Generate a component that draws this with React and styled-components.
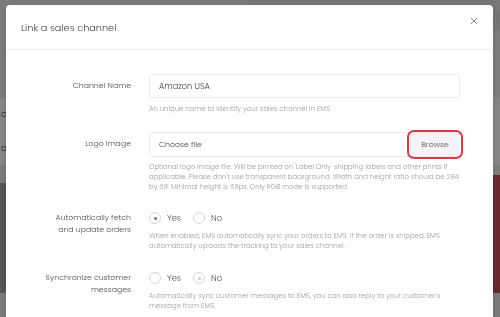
import styled, { createGlobalStyle } from 'styled-components';

const GlobalStyle = createGlobalStyle`
	html, body {
		margin: 0;
		padding: 0;
		width: 500px;
		height: 317px;
		overflow: hidden;
	}
	body {
		font-family: Poppins, Inter, 'Noto Sans', sans-serif;
		font-weight: 300;
		-webkit-font-smoothing: antialiased;
	}
`;

const Page = styled.div`
	display: flex;
	width: 500px;
	height: 317px;
	overflow: hidden;
`;
const Pane = styled.div`
	display: flex;
	flex-direction: column;
	flex: 1;
`;
const Band = styled.div`
	height: ${p => p.h}px;
	flex: ${p => (p.h ? 'none' : 1)};
	background: ${p => p.bg};
	color: #333;
	font-size: 9px;
	display: flex;
	align-items: center;
	padding-left: 1px;
`;

const Overlay = styled.div`
	position: fixed;
	inset: 0;
	background: rgba(0, 0, 0, 0.46);
`;

const Modal = styled.div`
	position: fixed;
	top: 5px;
	left: 6px;
	width: 487px;
	height: 340px;
	background: #fff;
	border-radius: 4px;
	box-shadow: 0 2px 8px rgba(0, 0, 0, 0.15);
`;
const Header = styled.div`
	display: flex;
	align-items: center;
	justify-content: space-between;
	height: 44px;
	padding: 0 15px;
	border-bottom: 1px solid #ebedf0;
`;
const Title = styled.h5`
	margin: 0;
	font-size: 9.7px;
	font-weight: 300;
	color: #444;
	padding-top: 1px;
`;
const Close = styled.button`
	border: 0;
	background: none;
	padding: 0;
	margin-top: -13px;
	display: flex;
	color: #8a8a8a;
`;

const Body = styled.div`
	padding: 24px 33px 0 16px;
	display: flex;
	flex-direction: column;
`;
const FormRow = styled.div`
	display: grid;
	grid-template-columns: 109px minmax(0, 1fr);
	column-gap: 18px;
	margin-bottom: ${p => p.mb}px;
`;
const Label = styled.label`
	text-align: right;
	font-size: 7.8px;
	line-height: 12px;
	color: #4d4d4d;
	padding-top: ${p => p.pad}px;
`;
const Field = styled.div`
	display: flex;
	flex-direction: column;
	min-width: 0;
`;
const Input = styled.div`
	display: flex;
	align-items: center;
	height: ${p => p.h}px;
	box-sizing: border-box;
	border: 1px solid #ebebeb;
	border-radius: 3px;
	padding-left: 9px;
	font-size: 8.2px;
	color: #444;
`;
const FileInput = styled(Input)`
	justify-content: space-between;
	font-size: 7.8px;
	padding-right: 0;
`;
const Browse = styled.span`
	display: flex;
	align-items: center;
	justify-content: center;
	align-self: stretch;
	width: 50px;
	background: #f3f4f8;
	color: #555;
	font-size: 7.8px;
	border-radius: 4px;
	outline: 2px solid #d63c48;
	outline-offset: 1px;
	margin: 0 -1px 0 0;
`;
const Help = styled.small`
	display: block;
	margin-top: ${p => p.mt}px;
	font-size: 6.9px;
	line-height: 10px;
	color: #a0a0a0;
	white-space: nowrap;
`;
const Radios = styled.div`
	display: flex;
	align-items: center;
	height: 14px;
	gap: 12px;
	font-size: 8.3px;
	color: #555;
`;
const RadioOption = styled.span`
	display: flex;
	align-items: center;
	gap: 6px;
`;
const Circle = styled.span`
	width: 10px;
	height: 10px;
	border-radius: 50%;
	border: 1px solid #d4d6dc;
	display: flex;
	align-items: center;
	justify-content: center;
	&::after {
		content: '';
		display: ${p => (p.on ? 'block' : 'none')};
		width: 3px;
		height: 3px;
		border-radius: 50%;
		background: ${p => (p.faint ? '#c6cad6' : '#6d7491')};
	}
`;

const Radio = ({ label, on, faint }) => (
	<RadioOption>
		<Circle on={on} faint={faint} />
		{label}
	</RadioOption>
);

const App = () => {
	return (
		<>
			<GlobalStyle />
			<Page>
				<Pane>
					<Band h={98} bg='#e4e4e4' />
					<Band h={33} bg='#fafafa'>o</Band>
					<Band h={34} bg='#fafafa'>a</Band>
					<Band h={18} bg='#e4e4e4' />
					<Band h={110} bg='#a0a0a0' />
					<Band bg='#e4e4e4' />
				</Pane>
				<Pane>
					<Band h={30} bg='#dcdcdc' />
					<Band h={68} bg='#eaeaea' />
					<Band h={67} bg='#fafafa' />
					<Band h={10} bg='#eaeaea' />
					<Band h={118} bg='#c45057' />
					<Band bg='#e6e6e6' />
				</Pane>
			</Page>
			<Overlay />
			<Modal>
				<Header>
					<Title>Link a sales channel</Title>
					<Close aria-label='Close'>
						<svg width='8' height='8' viewBox='0 0 8 8'>
							<path d='M1 1 L7 7 M7 1 L1 7' stroke='currentColor' strokeWidth='1' />
						</svg>
					</Close>
				</Header>
				<Body>
					<FormRow mb={18}>
						<Label pad={6}>Channel Name</Label>
						<Field>
							<Input h={24}>Amazon USA</Input>
							<Help mt={6}>An unique name to identify your sales channel in EMS.</Help>
						</Field>
					</FormRow>
					<FormRow mb={19}>
						<Label pad={6}>Logo image</Label>
						<Field>
							<FileInput h={25}>
								Choose file
								<Browse>Browse</Browse>
							</FileInput>
							<Help mt={5}>
								Optional logo image file. Will be printed on 'Label Only' shipping labels and other prints if
								<br />
								applicable. Please don't use transparent background. Width and height ratio should be 284
								<br />
								by 68. Minimal height is 68px. Only RGB mode is supported.
							</Help>
						</Field>
					</FormRow>
					<FormRow mb={20}>
						<Label pad={1}>
							Automatically fetch
							<br />
							and update orders
						</Label>
						<Field>
							<Radios>
								<Radio label='Yes' on />
								<Radio label='No' />
							</Radios>
							<Help mt={6}>
								When enabled, EMS automatically sync your orders to EMS. If the order is shipped, EMS
								<br />
								automatically uploads the tracking to your sales channel.
							</Help>
						</Field>
					</FormRow>
					<FormRow mb={0}>
						<Label pad={1}>
							Synchronize customer
							<br />
							messages
						</Label>
						<Field>
							<Radios>
								<Radio label='Yes' />
								<Radio label='No' on faint />
							</Radios>
							<Help mt={6}>
								Automatically sync customer messages to EMS, you can also reply to your customer's
								<br />
								message from EMS.
							</Help>
						</Field>
					</FormRow>
				</Body>
			</Modal>
		</>
	);
};

export default App;
